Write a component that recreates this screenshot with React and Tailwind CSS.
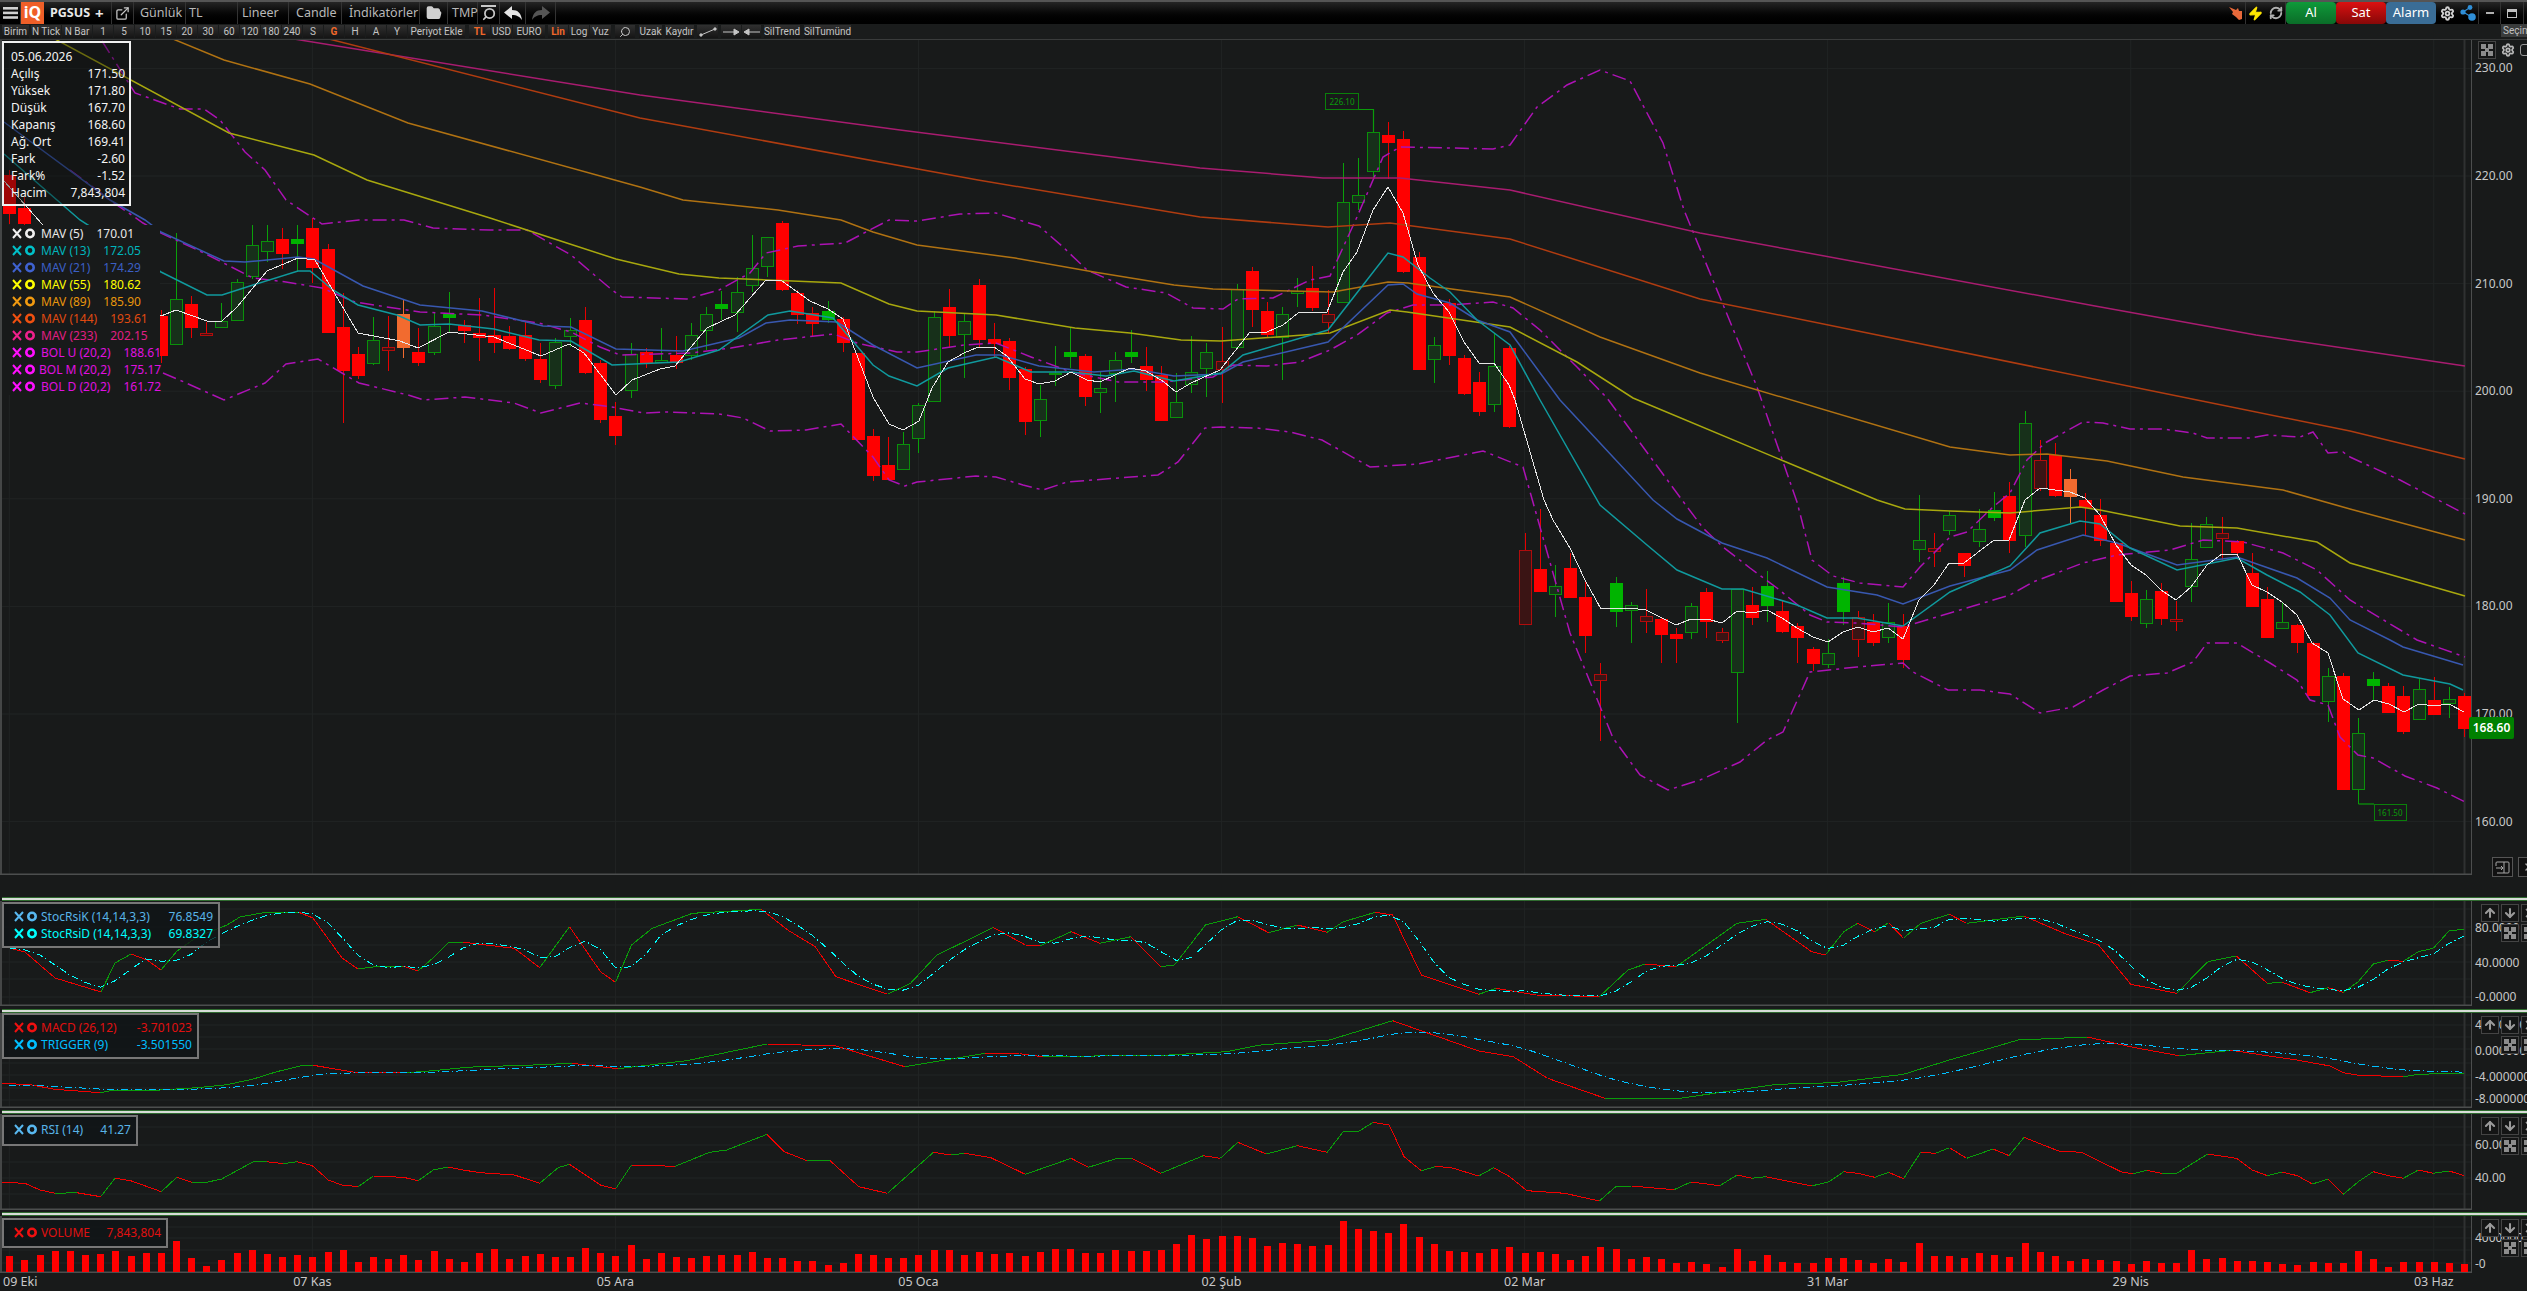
import React from 'react';
import { ExternalLink, FolderOpen, Search, Settings, Zap, RefreshCw, ArrowUp, ArrowDown, X } from 'lucide-react';

// candle centre for index i, every candle is 15.153px wide
const cx = (i) => 9.3 + 15.153 * i;
const priceY = (p) => 714 + (170 - p) * 10.76;

// zoomed reads -> page pixels
const z = (x0, y0, sx, sy, pts) => pts.map(([x, y]) => [x0 + x / sx, y0 + y / sy]);
const ptsStr = (pts) => pts.map((p) => p[0].toFixed(1) + ',' + p[1].toFixed(1)).join(' ');

// type, high, body top, body bottom, low (pixel y)
// g hollow green, G solid green, r red, d dark red, o orange
const candles = {
  0: ['r', 170, 175, 213, 224], 1: ['r', 197, 208, 223, 225],
  10: ['r', 310, 316, 355, 363], 11: ['g', 233, 299, 344, 344], 12: ['r', 296, 304, 327, 338], 13: ['d', 322, 333, 335, 335],
  14: ['g', 303, 321, 327, 327], 15: ['g', 279, 282, 320, 321], 16: ['g', 225, 245, 276, 279], 17: ['g', 225, 241, 251, 262],
  18: ['r', 228, 239, 253, 269], 19: ['G', 225, 239, 243, 272], 20: ['r', 218, 228, 267, 283], 21: ['r', 244, 249, 332, 333],
  22: ['r', 293, 327, 370, 423], 23: ['r', 347, 354, 375, 379], 24: ['g', 317, 340, 363, 365], 25: ['d', 316, 347, 350, 371],
  26: ['o', 299, 314, 347, 358], 27: ['r', 328, 352, 362, 366], 28: ['g', 313, 326, 352, 355], 29: ['G', 292, 314, 317, 332],
  30: ['r', 320, 325, 330, 343], 31: ['r', 298, 333, 337, 361], 32: ['r', 288, 335, 342, 353], 33: ['r', 326, 336, 348, 350],
  34: ['r', 322, 335, 358, 361], 35: ['r', 343, 359, 379, 383], 36: ['g', 338, 342, 385, 389], 37: ['g', 318, 330, 336, 347],
  38: ['r', 307, 320, 372, 374], 39: ['r', 360, 363, 419, 423], 40: ['r', 402, 416, 435, 445], 41: ['g', 343, 354, 390, 398],
  42: ['r', 348, 352, 362, 368], 43: ['g', 328, 360, 362, 362], 44: ['r', 336, 355, 362, 369], 45: ['g', 323, 335, 355, 360],
  46: ['g', 307, 314, 330, 350], 47: ['G', 291, 304, 308, 320], 48: ['g', 277, 292, 312, 332], 49: ['g', 235, 268, 285, 292],
  50: ['g', 237, 237, 266, 277], 51: ['r', 221, 223, 289, 291], 52: ['r', 290, 293, 314, 324], 53: ['r', 307, 313, 323, 336],
  54: ['G', 301, 311, 319, 323], 55: ['r', 317, 319, 342, 352], 56: ['r', 353, 353, 439, 440], 57: ['r', 429, 436, 475, 481],
  58: ['r', 437, 465, 479, 480], 59: ['g', 432, 444, 469, 470], 60: ['g', 403, 405, 438, 453], 61: ['g', 311, 317, 401, 402],
  62: ['r', 289, 307, 335, 348], 63: ['g', 313, 321, 334, 378], 64: ['r', 279, 285, 339, 347], 65: ['r', 323, 339, 343, 357],
  66: ['r', 338, 341, 377, 390], 67: ['r', 367, 369, 421, 435], 68: ['g', 385, 399, 420, 437], 69: ['g', 346, 373, 374, 386],
  70: ['G', 328, 352, 356, 368], 71: ['r', 354, 356, 396, 406], 72: ['g', 372, 388, 392, 413], 73: ['g', 352, 360, 373, 402],
  74: ['G', 330, 352, 356, 363], 75: ['r', 347, 366, 379, 391], 76: ['r', 366, 375, 420, 421], 77: ['g', 373, 402, 417, 418],
  78: ['g', 336, 372, 384, 393], 79: ['g', 343, 352, 368, 397], 80: ['d', 327, 361, 369, 403], 81: ['g', 284, 289, 347, 347],
  82: ['r', 267, 271, 309, 327], 83: ['r', 302, 311, 334, 337], 84: ['g', 307, 314, 337, 380], 85: ['g', 278, 291, 293, 307],
  86: ['r', 266, 288, 307, 311], 87: ['d', 290, 314, 322, 333], 88: ['g', 163, 202, 302, 302], 89: ['g', 158, 195, 202, 210],
  90: ['g', 109, 132, 171, 177], 91: ['r', 122, 135, 142, 179], 92: ['r', 131, 139, 271, 273], 93: ['r', 252, 257, 369, 369],
  94: ['g', 337, 345, 359, 383], 95: ['r', 299, 303, 355, 365], 96: ['r', 355, 358, 393, 395], 97: ['r', 372, 382, 411, 416],
  98: ['g', 333, 366, 404, 412], 99: ['r', 346, 348, 426, 428], 100: ['d', 533, 550, 624, 624], 101: ['r', 509, 569, 591, 592],
  102: ['g', 565, 586, 594, 617], 103: ['r', 553, 568, 597, 597], 104: ['r', 580, 597, 635, 653], 105: ['d', 663, 674, 680, 741],
  106: ['G', 577, 583, 611, 627], 107: ['g', 602, 605, 610, 643], 108: ['d', 589, 616, 621, 633], 109: ['r', 617, 619, 634, 663],
  110: ['r', 628, 634, 638, 663], 111: ['g', 603, 606, 632, 639], 112: ['r', 588, 592, 621, 638], 113: ['d', 628, 632, 640, 643],
  114: ['g', 589, 589, 672, 723], 115: ['r', 587, 605, 617, 625], 116: ['G', 571, 586, 605, 622], 117: ['r', 601, 611, 631, 633],
  118: ['r', 623, 626, 637, 663], 119: ['r', 647, 649, 663, 671], 120: ['g', 639, 653, 664, 668], 121: ['G', 577, 583, 611, 625],
  122: ['d', 611, 617, 639, 657], 123: ['r', 614, 622, 642, 646], 124: ['g', 603, 622, 637, 643], 125: ['r', 614, 626, 659, 668],
  126: ['g', 495, 540, 549, 562], 127: ['d', 533, 548, 551, 567], 128: ['g', 511, 515, 530, 535], 129: ['r', 553, 553, 565, 577],
  130: ['g', 509, 529, 541, 547], 131: ['G', 492, 510, 517, 521], 132: ['r', 482, 496, 540, 553], 133: ['g', 411, 423, 535, 547],
  134: ['d', 440, 460, 488, 491], 135: ['r', 443, 455, 495, 497], 136: ['o', 469, 479, 496, 523], 137: ['r', 493, 500, 507, 535],
  138: ['r', 499, 515, 540, 546], 139: ['r', 542, 543, 601, 601], 140: ['r', 581, 593, 616, 621], 141: ['g', 590, 599, 623, 628],
  142: ['r', 583, 591, 618, 625], 143: ['d', 601, 619, 621, 631], 144: ['g', 523, 559, 586, 602], 145: ['g', 517, 524, 547, 547],
  146: ['d', 517, 533, 538, 560], 147: ['r', 540, 541, 552, 559], 148: ['r', 553, 573, 606, 607], 149: ['r', 587, 599, 637, 638],
  150: ['g', 602, 622, 628, 628], 151: ['r', 624, 625, 642, 653], 152: ['r', 642, 643, 695, 696], 153: ['g', 668, 676, 701, 722],
  154: ['r', 673, 676, 789, 790], 155: ['g', 718, 733, 789, 804], 156: ['G', 672, 679, 685, 700], 157: ['r', 683, 686, 712, 712],
  158: ['r', 686, 696, 731, 734], 159: ['g', 679, 689, 719, 719], 160: ['r', 677, 700, 714, 715], 161: ['g', 687, 699, 703, 718],
  162: ['r', 693, 696, 728, 737],
};

const bodyStyle = {
  g: { fill: '#17301a', stroke: '#0a900a', wick: '#0aa00a' },
  G: { fill: '#00b400', stroke: '#00b400', wick: '#0aa00a' },
  r: { fill: '#ff0000', stroke: '#ff0000', wick: '#e80000' },
  d: { fill: '#3a1414', stroke: '#b00c0c', wick: '#e80000' },
  o: { fill: '#f26b2f', stroke: '#f26b2f', wick: '#f26b2f' },
};

const mav233 = [[294, 39], [640, 95], [900, 130], [1200, 168], [1323, 178], [1400, 178], [1510, 190], [1700, 233], [2095, 306], [2256, 335], [2465, 366]];
const mav144 = [[329, 39], [640, 118], [978, 180], [1200, 217], [1328, 227], [1390, 223], [1510, 239], [1700, 299], [2197, 400], [2350, 431], [2465, 459]];
const mav89 = [[173, 39], [224, 60], [310, 84], [408, 123], [640, 187], [683, 200], [778, 210], [841, 220], [873, 232], [917, 245], [1015, 258], [1094, 272], [1174, 285], [1213, 289], [1333, 292], [1388, 282], [1408, 283], [1510, 297], [1600, 337], [1700, 373], [1950, 447], [2010, 455], [2047, 454], [2107, 461], [2183, 477], [2283, 490], [2350, 509], [2465, 540]];
const mav55 = [[55, 39], [229, 133], [314, 155], [367, 180], [490, 218], [616, 259], [679, 274], [719, 278], [841, 283], [889, 304], [917, 311], [996, 315], [1075, 328], [1130, 333], [1181, 340], [1221, 341], [1330, 333], [1390, 310], [1407, 312], [1510, 327], [1577, 362], [1633, 398], [1877, 500], [1905, 509], [1950, 511], [2010, 513], [2080, 507], [2100, 510], [2180, 526], [2237, 528], [2317, 542], [2350, 563], [2465, 596]];
const mav21 = [[4, 122], [110, 200], [145, 220], [161, 232], [224, 261], [245, 262], [298, 257], [314, 259], [363, 286], [420, 305], [482, 311], [543, 326], [571, 327], [616, 349], [683, 351], [739, 338], [766, 323], [790, 320], [837, 322], [873, 345], [917, 368], [976, 355], [1000, 355], [1039, 366], [1094, 372], [1134, 369], [1174, 376], [1221, 374], [1243, 362], [1328, 342], [1388, 285], [1403, 284], [1417, 294], [1450, 303], [1477, 320], [1510, 332], [1560, 400], [1653, 500], [1677, 519], [1722, 543], [1767, 558], [1827, 587], [1877, 595], [1903, 604], [1950, 586], [2010, 570], [2037, 550], [2083, 535], [2117, 543], [2177, 565], [2237, 557], [2297, 578], [2330, 598], [2350, 620], [2390, 640], [2403, 647], [2463, 665]];
const mav13 = [[4, 154], [80, 220], [161, 272], [207, 295], [222, 295], [253, 285], [298, 271], [310, 271], [333, 290], [358, 305], [397, 315], [420, 325], [449, 324], [494, 329], [539, 340], [571, 341], [612, 365], [679, 362], [719, 350], [768, 315], [790, 311], [833, 318], [873, 365], [889, 376], [917, 386], [948, 368], [996, 357], [1031, 372], [1071, 372], [1106, 376], [1134, 371], [1174, 381], [1221, 373], [1243, 355], [1328, 330], [1388, 253], [1403, 257], [1430, 278], [1450, 292], [1477, 320], [1510, 345], [1540, 400], [1600, 505], [1647, 545], [1677, 570], [1722, 589], [1743, 589], [1797, 605], [1827, 618], [1857, 618], [1903, 626], [1950, 592], [2010, 566], [2040, 533], [2080, 521], [2100, 524], [2130, 548], [2177, 570], [2237, 558], [2267, 575], [2300, 592], [2330, 615], [2358, 653], [2403, 675], [2450, 684], [2463, 690]];
const mav5 = [[4, 181], [42, 224], [161, 316], [176, 310], [207, 321], [222, 321], [237, 307], [267, 271], [298, 258], [315, 260], [358, 333], [400, 341], [418, 348], [449, 332], [494, 337], [541, 356], [569, 344], [584, 353], [616, 395], [632, 380], [660, 369], [675, 366], [707, 328], [735, 315], [766, 280], [782, 281], [810, 301], [828, 309], [843, 319], [873, 397], [889, 424], [903, 430], [919, 421], [932, 388], [948, 362], [964, 353], [976, 348], [994, 347], [1007, 356], [1025, 379], [1039, 384], [1055, 381], [1071, 372], [1087, 380], [1100, 382], [1130, 368], [1146, 371], [1164, 382], [1176, 392], [1191, 383], [1220, 370], [1250, 332], [1267, 332], [1283, 325], [1298, 313], [1327, 312], [1343, 272], [1357, 252], [1373, 210], [1388, 187], [1403, 213], [1418, 265], [1433, 293], [1449, 312], [1464, 342], [1479, 363], [1494, 363], [1509, 385], [1515, 400], [1544, 500], [1553, 520], [1570, 548], [1585, 580], [1601, 609], [1630, 608], [1646, 610], [1676, 625], [1691, 619], [1707, 619], [1722, 623], [1737, 611], [1752, 613], [1767, 610], [1782, 618], [1797, 628], [1813, 637], [1828, 642], [1843, 632], [1858, 627], [1873, 632], [1888, 628], [1903, 639], [1919, 600], [1934, 585], [1949, 563], [1964, 563], [1994, 540], [2009, 540], [2025, 500], [2040, 488], [2055, 490], [2070, 492], [2085, 498], [2100, 515], [2116, 545], [2131, 565], [2146, 575], [2161, 590], [2176, 600], [2191, 587], [2207, 565], [2222, 554], [2237, 554], [2252, 585], [2267, 592], [2282, 602], [2297, 615], [2312, 643], [2328, 653], [2343, 699], [2359, 710], [2374, 700], [2389, 704], [2404, 712], [2419, 704], [2434, 706], [2449, 704], [2464, 712]];

const bolU = [[102, 41], [135, 93], [180, 109], [204, 109], [220, 120], [245, 152], [265, 170], [286, 200], [322, 224], [359, 220], [404, 220], [433, 228], [490, 230], [527, 230], [571, 255], [612, 290], [622, 297], [687, 299], [719, 290], [750, 273], [766, 253], [798, 246], [845, 243], [889, 220], [917, 221], [960, 214], [996, 213], [1039, 226], [1063, 247], [1087, 270], [1126, 287], [1166, 293], [1193, 308], [1223, 309], [1238, 299], [1273, 298], [1310, 280], [1330, 276], [1357, 217], [1383, 157], [1400, 147], [1453, 148], [1493, 149], [1510, 145], [1537, 107], [1567, 85], [1600, 70], [1630, 81], [1663, 143], [1684, 210], [1757, 387], [1797, 502], [1812, 560], [1833, 576], [1860, 583], [1903, 587], [1920, 567], [1950, 537], [1967, 532], [1993, 507], [2010, 493], [2027, 460], [2045, 443], [2083, 422], [2103, 423], [2130, 429], [2163, 429], [2193, 433], [2207, 438], [2250, 438], [2267, 435], [2300, 437], [2313, 432], [2328, 453], [2343, 452], [2350, 457], [2400, 480], [2465, 514]];
const bolM = [[70, 170], [110, 200], [143, 223], [161, 233], [204, 253], [253, 278], [286, 282], [322, 288], [355, 302], [420, 312], [482, 315], [539, 323], [571, 332], [600, 347], [620, 355], [691, 353], [731, 348], [778, 340], [834, 334], [857, 343], [897, 352], [917, 352], [964, 345], [996, 343], [1031, 357], [1071, 372], [1118, 382], [1162, 382], [1213, 377], [1233, 365], [1267, 366], [1300, 362], [1330, 350], [1357, 335], [1387, 313], [1413, 305], [1450, 305], [1493, 302], [1513, 308], [1540, 330], [1577, 367], [1607, 398], [1682, 500], [1703, 528], [1723, 547], [1750, 568], [1777, 588], [1810, 615], [1827, 622], [1857, 623], [1903, 627], [1950, 613], [2010, 595], [2033, 582], [2083, 563], [2117, 555], [2170, 550], [2203, 540], [2243, 542], [2283, 553], [2317, 570], [2350, 600], [2417, 640], [2465, 657]];
const bolD = [[163, 373], [184, 382], [224, 400], [265, 383], [286, 364], [318, 359], [359, 383], [408, 395], [424, 400], [465, 397], [514, 403], [541, 413], [580, 403], [612, 407], [644, 413], [667, 412], [719, 414], [743, 418], [770, 431], [806, 430], [841, 424], [873, 457], [889, 480], [905, 486], [917, 482], [976, 476], [996, 477], [1023, 485], [1043, 490], [1067, 482], [1158, 475], [1178, 462], [1205, 428], [1221, 427], [1257, 428], [1290, 432], [1322, 440], [1370, 467], [1418, 464], [1483, 451], [1523, 467], [1570, 633], [1613, 738], [1640, 775], [1668, 790], [1700, 780], [1740, 762], [1767, 740], [1783, 732], [1810, 672], [1857, 667], [1903, 663], [1913, 672], [1948, 690], [1980, 690], [2010, 694], [2040, 713], [2073, 707], [2103, 690], [2130, 676], [2167, 673], [2193, 662], [2207, 643], [2237, 643], [2270, 663], [2297, 680], [2310, 700], [2328, 705], [2340, 737], [2358, 755], [2373, 758], [2405, 776], [2437, 788], [2465, 802]];

const stocK = [
  [2, 946], [25, 952], [55, 978], [101, 992], [115, 963], [131, 954], [147, 960], [161, 970], [177, 951], [197, 937], [227, 925], [240, 917], [267, 912], [298, 912], [313, 918], [342, 958], [358, 969], [373, 967], [403, 966], [418, 971], [433, 958], [448, 943], [463, 942],
  ...z(480, 890, 0.8711, 3, [[0, 163], [30, 175], [52, 233], [78, 110], [105, 245], [118, 277], [132, 165], [150, 115], [185, 70], [245, 58], [268, 120], [292, 170], [310, 260], [355, 313], [375, 280], [398, 195], [425, 150], [447, 112], [475, 165], [488, 167], [515, 125], [540, 160], [567, 140], [593, 230], [605, 225], [632, 105], [660, 80], [687, 128], [712, 105], [738, 127], [752, 95], [780, 67], [795, 75], [820, 255], [870, 313], [885, 295], [920, 315], [975, 320], [1000, 240], [1015, 222], [1042, 230], [1095, 100], [1120, 88], [1160, 185], [1172, 195], [1188, 125], [1200, 100], [1215, 125], [1227, 98], [1240, 145], [1255, 100], [1280, 73], [1295, 100], [1345, 78], [1380, 130], [1410, 165], [1438, 283], [1478, 310], [1505, 215], [1530, 198]]),
  ...z(2230, 880, 3, 3, [[112, 310], [157, 307], [240, 338], [295, 323], [340, 337], [385, 305], [430, 252], [475, 241], [520, 244], [565, 215], [610, 205], [658, 152], [703, 148]]),
];
const macd = [
  ...z(0, 880, 3, 3, [[6, 610], [90, 614], [165, 628], [300, 638], [345, 630], [480, 630], [590, 623], [680, 614], [760, 597], [830, 575], [900, 558], [940, 556], [1060, 576], [1220, 578], [1300, 572], [1400, 562]]),
  ...z(480, 890, 0.8711, 3, [[0, 530], [40, 526], [80, 520], [120, 536], [180, 512], [250, 462], [310, 468], [370, 530], [440, 490], [470, 491], [490, 500], [600, 495], [650, 485], [680, 465], [740, 450], [795, 392], [870, 483], [900, 500], [930, 565], [980, 625], [1045, 625], [1130, 583], [1180, 578], [1240, 553], [1280, 510], [1340, 450], [1400, 441], [1440, 472], [1480, 497], [1520, 483]]),
  ...z(2230, 880, 3, 3, [[0, 510], [110, 527], [200, 540], [300, 558], [340, 578], [385, 586], [520, 590], [565, 583], [703, 579]]),
];
const rsi = [
  ...z(0, 880, 3, 3, [[6, 907], [75, 910], [120, 930], [165, 940], [230, 938], [302, 950], [345, 895], [392, 902], [484, 935], [530, 892], [575, 907], [620, 907], [665, 897], [760, 845], [800, 845], [850, 851], [890, 845], [937, 857], [985, 900], [1025, 915], [1075, 920], [1120, 888], [1210, 892], [1255, 902], [1300, 870], [1345, 861], [1390, 870]]),
  ...z(480, 890, 0.8711, 3, [[0, 848], [30, 855], [52, 880], [68, 833], [78, 823], [105, 885], [118, 897], [132, 825], [170, 829], [200, 787], [215, 780], [250, 733], [265, 785], [285, 812], [305, 812], [330, 890], [355, 910], [395, 787], [410, 795], [422, 790], [445, 803], [475, 853], [515, 805], [530, 832], [555, 805], [568, 805], [593, 850], [630, 797], [645, 805], [660, 757], [685, 792], [712, 767], [738, 787], [752, 725], [765, 725], [778, 697], [792, 705], [805, 800], [820, 842], [832, 830], [845, 832], [870, 858], [883, 833], [897, 860], [912, 902], [945, 910], [975, 933], [990, 888], [1003, 888], [1040, 899], [1055, 876], [1080, 887], [1095, 855], [1108, 865], [1120, 860], [1160, 888], [1175, 875], [1188, 845], [1200, 850], [1215, 862], [1227, 847], [1240, 866], [1255, 787], [1268, 790], [1280, 773], [1295, 805], [1318, 777], [1332, 797], [1345, 742], [1375, 783], [1395, 787], [1430, 846], [1440, 851], [1452, 841], [1465, 850], [1478, 850], [1505, 792], [1530, 805]]),
  ...z(2230, 880, 3, 3, [[67, 870], [112, 887], [157, 876], [202, 887], [247, 912], [295, 897], [340, 943], [385, 905], [430, 875], [475, 887], [520, 895], [565, 870], [610, 880], [658, 873], [703, 887]]),
];

// value of a polyline at every candle, for the moving averages on top of it
const sample = (pts) => {
  const out = [];
  for (let i = 0; i <= 162; i++) {
    const x = cx(i);
    let k = 0;
    while (k < pts.length - 2 && pts[k + 1][0] < x) k++;
    const [x1, y1] = pts[k];
    const [x2, y2] = pts[k + 1];
    const t = Math.max(0, Math.min(1, (x - x1) / (x2 - x1)));
    out.push(y1 + (y2 - y1) * t);
  }
  return out;
};
const stocD = sample(stocK).map((v, i, a) => {
  const from = Math.max(0, i - 2);
  const part = a.slice(from, i + 1);
  return [cx(i), part.reduce((s, n) => s + n, 0) / part.length];
});
const trigger = (() => {
  let e = 1086.6;
  return sample(macd).map((v, i) => {
    e = e + (v - e) * 0.2;
    return [cx(i), e];
  });
})();

// volume bar tops read from the crops
const volA = [1125, 1137, 1122, 1110, 1110, 1122, 1119, 1110, 1125, 1116, 1116, 1080, 1131, 1155, 1137, 1116, 1107, 1119, 1128, 1122, 1128, 1113, 1107, 1143, 1128, 1134, 1122, 1137, 1110, 1134, 1143, 1116, 1104];
const volB = [1086, 1074, 1107, 1098, 1092, 1101, 1101, 1074, 1089, 1098, 1065, 1107, 1089, 1101, 1104, 1098, 1095, 1095, 1086, 1104, 1104, 1113, 1113, 1125, 1119, 1092, 1095, 1104, 1104, 1095, 1080, 1080, 1095, 1086, 1092, 1089, 1098, 1086, 1077, 1077, 1089, 1089, 1080, 1083, 1083, 1080, 1062, 1035, 1047, 1038, 1038, 1044, 1068, 1059, 1062, 1068, 1065, 993, 1017, 1023, 1029, 1002, 1041, 1062, 1083, 1086, 1089, 1077, 1071, 1089, 1086, 1092, 1110, 1098, 1071, 1077, 1107, 1101, 1107, 1119, 1116, 1122, 1131, 1077, 1113, 1095, 1116, 1119, 1119, 1104, 1104, 1110, 1119, 1107, 1116, 1059, 1098, 1098, 1104, 1089, 1095, 1101, 1059, 1086, 1098, 1113, 1107, 1110, 1113, 1122, 1113, 1119, 1119, 1080, 1107, 1104, 1110, 1110, 1113];
const volC = [1140, 1140, 1143, 1149, 1152, 1143, 1146, 1146, 1110, 1134, 1158, 1143, 1143, 1143, 1146, 1149];
const volumes = [];
volB.forEach((t, k) => { volumes[31 + k] = (1145 - t) / 3; });
volA.forEach((t, k) => { volumes[k] = (1173 - t) / 3; });
volC.forEach((t, k) => { volumes[147 + k] = (1173 - t) / 3; });

const legendRows = [
  { label: 'MAV (5)', value: '170.01', icon: '#f0f0f0', text: 'text-[#e8e8e8]' },
  { label: 'MAV (13)', value: '172.05', icon: '#00c0c8', text: 'text-[#00b4bc]' },
  { label: 'MAV (21)', value: '174.29', icon: '#3f62d0', text: 'text-[#3b5fc4]' },
  { label: 'MAV (55)', value: '180.62', icon: '#ffff00', text: 'text-[#ffff00]' },
  { label: 'MAV (89)', value: '185.90', icon: '#f09a10', text: 'text-[#e8960c]' },
  { label: 'MAV (144)', value: '193.61', icon: '#f05010', text: 'text-[#e04a10]' },
  { label: 'MAV (233)', value: '202.15', icon: '#f0208c', text: 'text-[#e01e84]' },
  { label: 'BOL U (20,2)', value: '188.61', icon: '#ff10ff', text: 'text-[#e010e0]' },
  { label: 'BOL M (20,2)', value: '175.17', icon: '#ff10ff', text: 'text-[#e010e0]', shifted: true },
  { label: 'BOL D (20,2)', value: '161.72', icon: '#ff10ff', text: 'text-[#e010e0]' },
];

const infoRows = [
  ['Açılış', '171.50'], ['Yüksek', '171.80'], ['Düşük', '167.70'], ['Kapanış', '168.60'],
  ['Ağ. Ort', '169.41'], ['Fark', '-2.60'], ['Fark%', '-1.52'], ['Hacim', '7,843,804'],
];

const periods = ['1', '5', '10', '15', '20', '30', '60', '120', '180', '240', 'S', 'G', 'H', 'A', 'Y'];
const dates = [['09 Eki', 0], ['07 Kas', 20], ['05 Ara', 40], ['05 Oca', 60], ['02 Şub', 80], ['02 Mar', 100], ['31 Mar', 120], ['29 Nis', 140], ['03 Haz', 160]];

const XO = ({ color }) => (
  <svg width="23" height="11" viewBox="0 0 23 11" className="shrink-0">
    <path d="M1 1 L9 10 M9 1 L1 10" stroke={color} strokeWidth="2" fill="none" />
    <circle cx="18" cy="5.5" r="3.7" stroke={color} strokeWidth="2.6" fill="none" />
  </svg>
);

// red going down, green going up
const DirLine = ({ pts }) => {
  let up = '';
  let down = '';
  for (let k = 1; k < pts.length; k++) {
    const seg = `M${pts[k - 1][0].toFixed(1)} ${pts[k - 1][1].toFixed(1)}L${pts[k][0].toFixed(1)} ${pts[k][1].toFixed(1)}`;
    if (pts[k][1] > pts[k - 1][1]) down += seg;
    else up += seg;
  }
  return (
    <g shapeRendering="crispEdges">
      <path d={up} stroke="#0a9c0a" strokeWidth="1" fill="none" />
      <path d={down} stroke="#f00000" strokeWidth="1" fill="none" />
    </g>
  );
};

const PlotFrame = ({ top, height, grid }) => (
  <>
    {grid.map((y) => <line key={y} x1="2" x2="2471" y1={y} y2={y} stroke="#212424" strokeWidth="1" />)}
    {dates.map(([d, i]) => <line key={d} x1={cx(i)} x2={cx(i)} y1={top} y2={top + height} stroke="#212424" strokeWidth="1" />)}
    <rect x="2463.5" y={top} width="2" height={height} fill="#2f3131" />
    <rect x="0" y={top} width="2" height={height} fill="#444646" />
    <rect x="2471" y={top} width="1.5" height={height} fill="#4c4e4e" />
    <rect x="0" y={top + height - 1.5} width="2472" height="1.5" fill="#4c4e4e" />
  </>
);

const SquareBtn = ({ children, className }) => (
  <div className={`absolute w-[18px] h-[18px] flex items-center justify-center bg-[#141515] border border-[#444] text-[#9a9a9a] ${className}`}>
    {children}
  </div>
);

const FourSquares = () => (
  <svg width="12" height="12" viewBox="0 0 12 12" fill="#8c8c8c">
    <rect x="0" y="0" width="5" height="5" /><rect x="7" y="0" width="5" height="5" />
    <rect x="0" y="7" width="5" height="5" /><rect x="7" y="7" width="5" height="5" />
    <rect x="4" y="4" width="4" height="4" />
  </svg>
);

const PaneButtons = () => (
  <>
    <SquareBtn className="left-[2481px] top-[3px]"><ArrowUp size={14} strokeWidth={3.5} /></SquareBtn>
    <SquareBtn className="left-[2501px] top-[3px]"><ArrowDown size={14} strokeWidth={3.5} /></SquareBtn>
    <SquareBtn className="left-[2521px] top-[3px]"><X size={14} strokeWidth={3} /></SquareBtn>
    <SquareBtn className="left-[2501px] top-[23px]"><FourSquares /></SquareBtn>
    <SquareBtn className="left-[2521px] top-[23px]"><FourSquares /></SquareBtn>
  </>
);

const AxisLabel = ({ y, top, children }) => (
  <span className="absolute left-[2475px] text-[12px] leading-[18px] text-[#c8c8c8] whitespace-nowrap" style={{ top: y - top - 9 }}>
    {children}
  </span>
);

const Separator = () => (
  <div className="ml-[2px] h-[4px] border-t border-b border-[#2f6b2f] bg-[#d8dcd8]" />
);

const IndicatorBox = ({ className, rows }) => (
  <div className={`absolute left-[2px] border-2 border-[#777] bg-[#101416]/80 pl-[10px] pr-[5px] py-[4px] ${className}`}>
    {rows.map((r) => (
      <div key={r.label} className={`flex items-center justify-between h-[17px] text-[12px] leading-[17px] whitespace-nowrap ${r.text}`}>
        <span className="flex items-center gap-[4px]"><XO color={r.icon} />{r.label}</span>
        <span>{r.value}</span>
      </div>
    ))}
  </div>
);

const TopCell = ({ className, children }) => (
  <div className={`h-full flex items-center border-r border-[#333] text-[#b8b8b8] ${className}`}>{children}</div>
);

const TopBar = () => (
  <div className="h-[24px] flex border-t-2 border-[#555] bg-linear-to-b from-[#252525] to-black text-[12.5px]">
    <TopCell className="w-[21px] justify-center">
      <svg width="15" height="12" viewBox="0 0 15 12" fill="#d0d0d0">
        <rect y="0" width="15" height="2.6" /><rect y="4.6" width="15" height="2.6" /><rect y="9.2" width="15" height="2.6" />
      </svg>
    </TopCell>
    <div className="w-[23px] h-full bg-[#ef5f28] text-white font-bold text-[16px] leading-[21px] text-center">iQ</div>
    <TopCell className="w-[68px] pl-[6px] gap-[5px] font-bold text-[#e8e8e8]">PGSUS<span className="text-[15px]">+</span></TopCell>
    <TopCell className="w-[22px] justify-center"><ExternalLink size={15} color="#c8c8c8" /></TopCell>
    <TopCell className="w-[52px] pl-[6px]">Günlük</TopCell>
    <TopCell className="w-[52px] pl-[3px]">TL</TopCell>
    <TopCell className="w-[51px] pl-[4px]">Lineer</TopCell>
    <TopCell className="w-[53px] pl-[7px]">Candle</TopCell>
    <TopCell className="w-[78px] pl-[7px]">İndikatörler</TopCell>
    <TopCell className="w-[28px] justify-center"><FolderOpen size={16} color="#d0d0d0" fill="#d0d0d0" /></TopCell>
    <TopCell className="w-[30px] pl-[4px]">TMP</TopCell>
    <TopCell className="w-[22px] justify-center">
      <div className="flex flex-col items-center text-[#c8c8c8]">
        <div className="w-[15px] h-[2px] bg-[#c8c8c8]" />
        <Search size={14} strokeWidth={3} className="-scale-x-100" />
      </div>
    </TopCell>
    <TopCell className="w-[26px] justify-center">
      <svg width="20" height="16" viewBox="0 0 20 16" fill="#e4e4e4"><path d="M9 1 L1 7.5 L9 14 V10 C14 10 17 12 19 15 C18 8 15 5 9 5 Z" /></svg>
    </TopCell>
    <TopCell className="w-[30px] justify-center">
      <svg width="20" height="16" viewBox="0 0 20 16" fill="#555" className="-scale-x-100"><path d="M9 1 L1 7.5 L9 14 V10 C14 10 17 12 19 15 C18 8 15 5 9 5 Z" /></svg>
    </TopCell>

    <div className="ml-auto h-full flex">
      <TopCell className="w-[19px] justify-center">
        <svg width="14" height="15" viewBox="0 0 14 15" fill="#e8693a"><path d="M0 1 L7 4 L9 2 L10 5 L13 5 L13 13 L10 14 L7 11 L3 8 L4 6 Z" /></svg>
      </TopCell>
      <TopCell className="w-[40px] justify-center gap-[6px]">
        <Zap size={15} color="#ffe600" fill="#ffe600" />
        <RefreshCw size={14} color="#b0b0b0" strokeWidth={3.2} />
      </TopCell>
      <div className="w-[50px] h-full flex items-center justify-center rounded-[4px] bg-linear-to-b from-[#0f9a3a] to-[#0a6d28] text-white text-[13px]">Al</div>
      <div className="w-[50px] h-full flex items-center justify-center rounded-[4px] bg-linear-to-b from-[#dc1010] to-[#860808] text-white text-[13px]">Sat</div>
      <div className="w-[50px] h-full flex items-center justify-center rounded-[4px] bg-[#3a6d96] text-white text-[13px]">Alarm</div>
      <TopCell className="w-[43px] pl-[4px] gap-[5px]">
        <Settings size={15} color="#d0d0d0" strokeWidth={3} />
        <svg width="17" height="16" viewBox="0 0 17 16" fill="#2f8fd8">
          <circle cx="3" cy="7" r="2.6" /><circle cx="10" cy="2.5" r="2.4" /><circle cx="12" cy="12" r="3.8" />
          <path d="M3 7 L10 2.5 M3 7 L10 11" stroke="#2f8fd8" strokeWidth="1.2" />
        </svg>
      </TopCell>
      <TopCell className="w-[22px] justify-center"><div className="w-[8px] h-[2px] bg-[#b0b0b0]" /></TopCell>
      <TopCell className="w-[23px] justify-center"><div className="w-[10px] h-[9px] border border-t-[3px] border-[#c0c0c0]" /></TopCell>
      <div className="w-[3px]" />
    </div>
  </div>
);

const ToolBtn = ({ className, active, children }) => (
  <div className={`h-[13px] flex items-center justify-center bg-linear-to-b from-[#303030] to-[#151515] whitespace-nowrap ${active ? 'text-[#f0682a] font-bold' : 'text-[#c4c4c4]'} ${className}`}>
    {children}
  </div>
);

const ToolBar = () => (
  <div className="relative h-[16px] flex items-center pl-[2px] border-b border-[#3a3c3c] bg-[#1a1c1c] text-[10px] font-['Roboto',sans-serif]">
    <ToolBtn className="w-[27px] mr-[2px]">Birim</ToolBtn>
    <ToolBtn className="w-[30px] mr-px">N Tick</ToolBtn>
    <ToolBtn className="w-[30px] mr-px">N Bar</ToolBtn>
    {periods.map((p) => (
      <ToolBtn key={p} className="w-[20px] mr-px" active={p === 'G'}>{p}</ToolBtn>
    ))}
    <ToolBtn className="w-[57px] mr-[4px]">Periyot Ekle</ToolBtn>
    <ToolBtn className="w-[21px] mr-px" active>TL</ToolBtn>
    <ToolBtn className="w-[21px] mr-px">USD</ToolBtn>
    <ToolBtn className="w-[32px] mr-[3px]">EURO</ToolBtn>
    <ToolBtn className="w-[20px] mr-px" active>Lin</ToolBtn>
    <ToolBtn className="w-[20px] mr-px">Log</ToolBtn>
    <ToolBtn className="w-[21px] mr-[4px]">Yuz</ToolBtn>
    <ToolBtn className="w-[20px] mr-[4px]"><Search size={12} color="#c8c8c8" className="-scale-x-100" /></ToolBtn>
    <ToolBtn className="w-[23px] mr-[3px]">Uzak</ToolBtn>
    <ToolBtn className="w-[29px] mr-[3px]">Kaydır</ToolBtn>
    <ToolBtn className="w-[21px] mr-[3px]">
      <svg width="18" height="10" viewBox="0 0 18 10" stroke="#c4c4c4" fill="#c4c4c4"><path d="M2 8 L16 2" /><circle cx="2" cy="8" r="1.2" /><circle cx="16" cy="2" r="1.2" /></svg>
    </ToolBtn>
    <ToolBtn className="w-[20px] mr-px">
      <svg width="18" height="8" viewBox="0 0 18 8" stroke="#c4c4c4" fill="#c4c4c4"><path d="M1 4 H13" /><path d="M12 1 L17 4 L12 7 Z" /></svg>
    </ToolBtn>
    <ToolBtn className="w-[19px] mr-[3px]">
      <svg width="18" height="8" viewBox="0 0 18 8" stroke="#c4c4c4" fill="#c4c4c4"><path d="M5 4 H17" /><path d="M6 1 L1 4 L6 7 Z" /></svg>
    </ToolBtn>
    <ToolBtn className="w-[36px] mr-[4px]">SilTrend</ToolBtn>
    <ToolBtn className="w-[47px]">SilTumünd</ToolBtn>
    <div className="absolute left-[2501px] top-0 h-[13px] w-[26px] bg-[#3a3c3c] text-[#c0c0c0] pl-[2px] leading-[13px]">Seçim</div>
  </div>
);

const Candle = ({ i, c }) => {
  const [type, hi, top, bot, lo] = c;
  const s = bodyStyle[type];
  const x = Math.round(cx(i));
  return (
    <g shapeRendering="crispEdges">
      <line x1={x + 0.5} x2={x + 0.5} y1={hi} y2={top} stroke={s.wick} />
      <line x1={x + 0.5} x2={x + 0.5} y1={bot} y2={lo} stroke={s.wick} />
      <rect x={x - 5.5} y={top + 0.5} width="12" height={Math.max(1, bot - top)} fill={s.fill} stroke={s.stroke} />
    </g>
  );
};

const MainChart = () => {
  const top = 40;
  const height = 835;
  const prices = [230, 220, 210, 200, 190, 180, 170, 160];
  const maLines = [[mav233, '#a81c70'], [mav144, '#b03c10'], [mav89, '#b07212'], [mav55, '#a8a80e'], [mav21, '#3858b0'], [mav13, '#109a9e']];
  return (
    <div className="relative h-[835px]">
      <svg width="2472" height={height} viewBox={`0 ${top} 2472 ${height}`} className="block">
        <PlotFrame top={top} height={height} grid={prices.map(priceY)} />
        {Object.entries(candles).map(([i, c]) => <Candle key={i} i={Number(i)} c={c} />)}
        {[bolU, bolM, bolD].map((pts, k) => (
          <polyline key={k} points={ptsStr(pts)} fill="none" stroke="#ac12b4" strokeWidth="1.5" strokeDasharray="14 5 3 5" />
        ))}
        {maLines.map(([pts, color]) => (
          <polyline key={color} points={ptsStr(pts)} fill="none" stroke={color} strokeWidth="1.5" />
        ))}
        <polyline points={ptsStr(mav5)} fill="none" stroke="#e6e6e6" strokeWidth="1" shapeRendering="crispEdges" />
        {/* high / low tags */}
        <path d={`M${Math.round(cx(90)) + 0.5} 132 V109.5 H1358`} stroke="#0a9c0a" fill="none" strokeWidth="1.2" />
        <rect x="1325.5" y="93.5" width="33" height="16" fill="#181a1a" stroke="#0a800a" />
        <text x="1342" y="105" textAnchor="middle" fontSize="8" fill="#0a9c0a">226.10</text>
        <path d={`M${Math.round(cx(155)) + 0.5} 804 H2374`} stroke="#0a9c0a" fill="none" strokeWidth="1.2" />
        <rect x="2374.5" y="804.5" width="32" height="16" fill="#181a1a" stroke="#0a800a" />
        <text x="2390" y="815.5" textAnchor="middle" fontSize="8" fill="#0a9c0a">161.50</text>
      </svg>

      {prices.map((p) => <AxisLabel key={p} y={priceY(p)} top={top}>{p.toFixed(2)}</AxisLabel>)}

      <div className="absolute left-[2469px] top-[677px] w-[45px] h-[22px] rounded-[2px] bg-[#008000] text-white text-[12px] font-semibold leading-[22px] text-center">168.60</div>

      <SquareBtn className="left-[2478px] top-[1px]"><FourSquares /></SquareBtn>
      <div className="absolute left-[2501px] top-[3px] text-[#b8b8b8]"><Settings size={14} strokeWidth={3} /></div>
      <div className="absolute left-[2520px] top-[4px] w-[10px] h-[12px] rounded-[3px] border border-[#9a9a9a]" />
      <div className="absolute left-[2492px] top-[817px] w-[21px] h-[20px] flex items-center justify-center bg-[#111] border border-[#555]">
        <svg width="15" height="13" viewBox="0 0 15 13" fill="none" stroke="#a8a8a8"><path d="M1 5 V2 Q1 1 2 1 H13 Q14 1 14 2 V11 Q14 12 13 12 H2 M1 7 H8 M6 5 L8 7 L6 9 M9 1 V12" /></svg>
      </div>
      <div className="absolute left-[2518px] top-[817px] w-[21px] h-[20px] flex items-center justify-center bg-[#111] border border-[#555] text-[#a8a8a8]"><X size={12} strokeWidth={3} /></div>

      {/* price info box */}
      <div className="absolute left-[2px] top-[1px] w-[129px] h-[165px] border-2 border-[#f0f0f0] bg-[#0c0e0e]/40 pl-[7px] pr-[4px] pt-[5px] text-[12px] leading-[17px] text-[#f4f4f4]">
        <div>05.06.2026</div>
        {infoRows.map(([k, v]) => (
          <div key={k} className="flex justify-between"><span>{k}</span><span>{v}</span></div>
        ))}
      </div>

      {/* moving average legend */}
      <div className="absolute left-[2px] top-[185px] w-[158px] h-[170px] bg-[#181a1a]">
        {legendRows.map((r) => (
          <div key={r.label} className={`flex items-center h-[17px] pl-[10px] text-[12px] whitespace-nowrap ${r.text}`}>
            <XO color={r.icon} />
            <span className={r.shifted ? 'ml-[4px]' : 'ml-[6px]'}>{r.label}</span>
            <span className="ml-[13px]">{r.value}</span>
          </div>
        ))}
      </div>
    </div>
  );
};

const StocPane = () => (
  <div className="relative h-[105px]">
    <svg width="2472" height="105" viewBox="0 901 2472 105" className="block">
      <PlotFrame top={901} height={105} grid={[909, 927, 945, 962, 979, 997]} />
      <DirLine pts={stocK} />
      <polyline points={ptsStr(stocD)} fill="none" stroke="#00ffff" strokeWidth="1" strokeDasharray="7 3 1 3" shapeRendering="crispEdges" />
    </svg>
    <AxisLabel y={927.5} top={901}>80.0000</AxisLabel>
    <AxisLabel y={962.5} top={901}>40.0000</AxisLabel>
    <AxisLabel y={997} top={901}>-0.0000</AxisLabel>
    <PaneButtons />
    <IndicatorBox className="top-[1px] w-[218px]" rows={[
      { label: 'StocRsiK (14,14,3,3)', value: '76.8549', icon: '#58b8f0', text: 'text-[#58b4e8]' },
      { label: 'StocRsiD (14,14,3,3)', value: '69.8327', icon: '#00ffff', text: 'text-[#00ffff]' },
    ]} />
  </div>
);

const MacdPane = () => (
  <div className="relative h-[95px]">
    <svg width="2472" height="95" viewBox="0 1013 2472 95" className="block">
      <PlotFrame top={1013} height={95} grid={[1025, 1037, 1049, 1063, 1075, 1088, 1100]} />
      <DirLine pts={macd} />
      <polyline points={ptsStr(trigger)} fill="none" stroke="#00bfff" strokeWidth="1" strokeDasharray="7 3 1 3" shapeRendering="crispEdges" />
    </svg>
    <AxisLabel y={1025} top={1013}>4.000000</AxisLabel>
    <AxisLabel y={1051} top={1013}>0.000000</AxisLabel>
    <AxisLabel y={1077} top={1013}>-4.000000</AxisLabel>
    <AxisLabel y={1099} top={1013}>-8.000000</AxisLabel>
    <PaneButtons />
    <IndicatorBox className="top-0 w-[197px]" rows={[
      { label: 'MACD (26,12)', value: '-3.701023', icon: '#f01010', text: 'text-[#e01010]' },
      { label: 'TRIGGER (9)', value: '-3.501550', icon: '#00bfff', text: 'text-[#00bfff]' },
    ]} />
  </div>
);

const RsiPane = () => (
  <div className="relative h-[96px]">
    <svg width="2472" height="96" viewBox="0 1114 2472 96" className="block">
      <PlotFrame top={1114} height={96} grid={[1127, 1145, 1162, 1178, 1194]} />
      <DirLine pts={rsi} />
    </svg>
    <AxisLabel y={1145} top={1114}>60.00</AxisLabel>
    <AxisLabel y={1178} top={1114}>40.00</AxisLabel>
    <PaneButtons />
    <IndicatorBox className="top-[1px] w-[136px] pb-[6px]" rows={[
      { label: 'RSI (14)', value: '41.27', icon: '#58b8f0', text: 'text-[#58b4e8]' },
    ]} />
  </div>
);

const VolumePane = () => (
  <div className="relative h-[57px]">
    <svg width="2472" height="57" viewBox="0 1216 2472 57" className="block">
      <PlotFrame top={1216} height={57} grid={[1227, 1238, 1250, 1263]} />
      {volumes.map((h, i) => (
        <rect key={i} x={Math.round(cx(i)) - 3} y={1271.7 - h} width="7" height={h} fill="#ff0000" shapeRendering="crispEdges" />
      ))}
    </svg>
    <AxisLabel y={1238} top={1216}>4000000</AxisLabel>
    <AxisLabel y={1264} top={1216}>-0</AxisLabel>
    <PaneButtons />
    <IndicatorBox className="top-[2px] w-[166px] pb-[5px]" rows={[
      { label: 'VOLUME', value: '7,843,804', icon: '#f01010', text: 'text-[#e01010]' },
    ]} />
  </div>
);

const DateAxis = () => (
  <div className="relative h-[18px]">
    {dates.map(([d, i]) => (
      <span
        key={d}
        className={`absolute top-0 text-[12.5px] leading-[18px] text-[#c8c8c8] whitespace-nowrap ${i === 0 ? '' : '-translate-x-1/2'}`}
        style={{ left: i === 0 ? 3 : cx(i) }}
      >
        {d}
      </span>
    ))}
  </div>
);

export default function App() {
  return (
    <div className="relative w-full h-screen overflow-hidden bg-[#181a1a] font-['Noto_Sans',sans-serif]">
      <TopBar />
      <ToolBar />
      <MainChart />
      <div className="h-[22px]" />
      <Separator />
      <StocPane />
      <div className="h-[3px]" />
      <Separator />
      <MacdPane />
      <div className="h-[2px]" />
      <Separator />
      <RsiPane />
      <div className="h-[2px]" />
      <Separator />
      <VolumePane />
      <DateAxis />
    </div>
  );
}
